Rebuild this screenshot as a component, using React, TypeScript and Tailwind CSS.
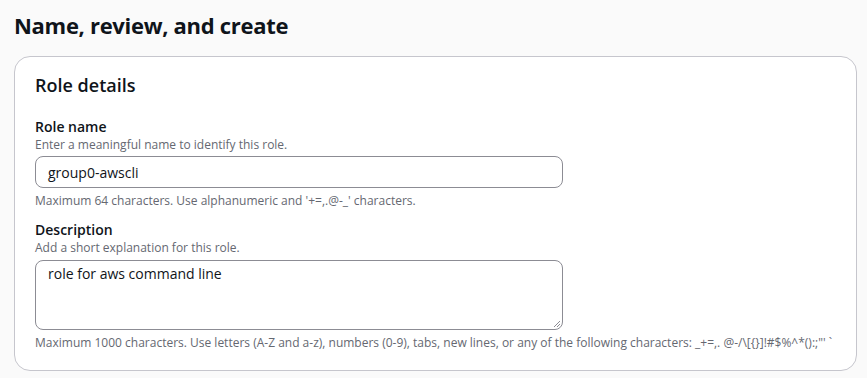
import React from "react";

export default function App() {
  return (
    <div className="w-[867px] h-[378px] overflow-hidden bg-[#fafafa] px-[14px] pt-[10px]" style={{ fontFamily: '"Open Sans", "Noto Sans", sans-serif' }}>
      <h1 className="text-[22px] leading-[30px] font-bold text-[#0f141a] tracking-[-0.3px]">Name, review, and create</h1>
      <div className="mt-[16px] w-[843px] rounded-[16px] border border-[#c6c6cd] bg-white px-[20px] pt-[16px] pb-[19px]">
        <h2 className="text-[18px] leading-[24px] font-semibold text-[#0f141a]">Role details</h2>
        <div className="mt-[20px]">
          <div className="text-[14px] leading-[20px] font-semibold text-[#0f141a]">Role name</div>
          <div className="text-[12px] leading-[16px] text-[#656871]">Enter a meaningful name to identify this role.</div>
          <div className="mt-[3px] w-[528px] h-[32px] rounded-[8px] border border-[#8c8c94] bg-white px-[12px] flex items-center text-[14px] text-[#0f141a]">group0-awscli</div>
          <div className="mt-[5px] text-[12px] leading-[16px] text-[#656871]">Maximum 64 characters. Use alphanumeric and '+=,.@-_' characters.</div>
        </div>
        <div className="mt-[11px]">
          <div className="text-[14px] leading-[20px] font-semibold text-[#0f141a]">Description</div>
          <div className="text-[12px] leading-[16px] text-[#656871]">Add a short explanation for this role.</div>
          <div className="relative mt-[4px] w-[528px] h-[70px] rounded-[8px] border border-[#8c8c94] bg-white px-[12px] pt-[3px] text-[14px] leading-[20px] text-[#0f141a]">
            role for aws command line
            <svg className="absolute right-[1px] bottom-[1px]" width="9" height="9" viewBox="0 0 9 9">
              <path d="M8 2L2 8M8 5L5 8" stroke="#8c8c94" strokeWidth="1" />
            </svg>
          </div>
          <div className="mt-[5px] text-[12px] leading-[16px] text-[#656871] whitespace-nowrap">Maximum 1000 characters. Use letters (A-Z and a-z), numbers (0-9), tabs, new lines, or any of the following characters: _+=,. @-/\[{"{"}{"}"}]!#$%^*():;"' `</div>
        </div>
      </div>
    </div>
  );
}
